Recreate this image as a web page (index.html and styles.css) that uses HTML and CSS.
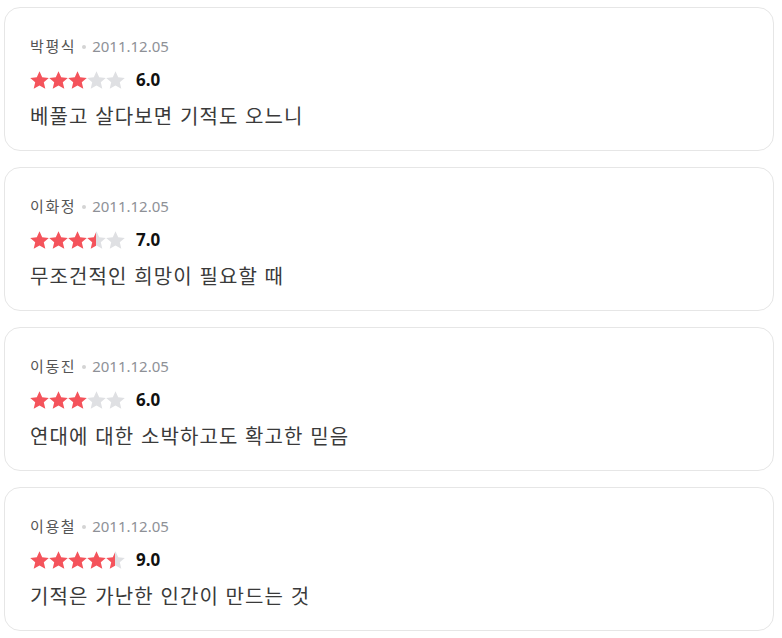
FILE: index.html
```html
<!DOCTYPE html>
<html lang="ko">
<head>
<meta charset="utf-8">
<link rel="stylesheet" href="styles.css">
</head>
<body>
<svg class="defs" width="0" height="0" aria-hidden="true">
  <defs>
    <linearGradient id="half" x1="0" x2="1" y1="0" y2="0">
      <stop offset="50%" stop-color="#f4535b"/>
      <stop offset="50%" stop-color="#dfe0e3"/>
    </linearGradient>
    <polygon id="star" points="9.5,0.3 12.2,6.3 18.8,6.9 13.8,11.3 15.3,17.8 9.5,14.4 3.7,17.8 5.2,11.3 0.2,6.9 6.8,6.3"/>
  </defs>
</svg>
<div class="list">
  <div class="card">
    <div class="meta"><span class="name">박평식</span><span class="dot"></span><span class="date">2011.12.05</span></div>
    <div class="rating">
      <span class="stars">
        <svg class="star on" viewBox="0 0 19 18"><use href="#star"/></svg>
        <svg class="star on" viewBox="0 0 19 18"><use href="#star"/></svg>
        <svg class="star on" viewBox="0 0 19 18"><use href="#star"/></svg>
        <svg class="star off" viewBox="0 0 19 18"><use href="#star"/></svg>
        <svg class="star off" viewBox="0 0 19 18"><use href="#star"/></svg>
      </span>
      <span class="score">6.0</span>
    </div>
    <p class="comment">베풀고 살다보면 기적도 오느니</p>
  </div>
  <div class="card">
    <div class="meta"><span class="name">이화정</span><span class="dot"></span><span class="date">2011.12.05</span></div>
    <div class="rating">
      <span class="stars">
        <svg class="star on" viewBox="0 0 19 18"><use href="#star"/></svg>
        <svg class="star on" viewBox="0 0 19 18"><use href="#star"/></svg>
        <svg class="star on" viewBox="0 0 19 18"><use href="#star"/></svg>
        <svg class="star half" viewBox="0 0 19 18"><use href="#star"/></svg>
        <svg class="star off" viewBox="0 0 19 18"><use href="#star"/></svg>
      </span>
      <span class="score">7.0</span>
    </div>
    <p class="comment">무조건적인 희망이 필요할 때</p>
  </div>
  <div class="card">
    <div class="meta"><span class="name">이동진</span><span class="dot"></span><span class="date">2011.12.05</span></div>
    <div class="rating">
      <span class="stars">
        <svg class="star on" viewBox="0 0 19 18"><use href="#star"/></svg>
        <svg class="star on" viewBox="0 0 19 18"><use href="#star"/></svg>
        <svg class="star on" viewBox="0 0 19 18"><use href="#star"/></svg>
        <svg class="star off" viewBox="0 0 19 18"><use href="#star"/></svg>
        <svg class="star off" viewBox="0 0 19 18"><use href="#star"/></svg>
      </span>
      <span class="score">6.0</span>
    </div>
    <p class="comment">연대에 대한 소박하고도 확고한 믿음</p>
  </div>
  <div class="card">
    <div class="meta"><span class="name">이용철</span><span class="dot"></span><span class="date">2011.12.05</span></div>
    <div class="rating">
      <span class="stars">
        <svg class="star on" viewBox="0 0 19 18"><use href="#star"/></svg>
        <svg class="star on" viewBox="0 0 19 18"><use href="#star"/></svg>
        <svg class="star on" viewBox="0 0 19 18"><use href="#star"/></svg>
        <svg class="star on" viewBox="0 0 19 18"><use href="#star"/></svg>
        <svg class="star half" viewBox="0 0 19 18"><use href="#star"/></svg>
      </span>
      <span class="score">9.0</span>
    </div>
    <p class="comment">기적은 가난한 인간이 만드는 것</p>
  </div>
</div>
</body>
</html>
```

FILE: styles.css
```css
html, body {
  margin: 0;
  padding: 0;
  background: #ffffff;
}
body {
  font-family: "Noto Sans", "Noto Sans CJK KR", sans-serif;
  color: #333;
}
.defs {
  position: absolute;
  width: 0;
  height: 0;
  overflow: hidden;
}
.list {
  display: flex;
  flex-direction: column;
  gap: 16px;
  padding: 7px 8px 0 4px;
}
.card {
  border: 1px solid #e6e6e6;
  border-radius: 16px;
  padding: 27px 25px 20px 25px;
  height: 144px;
  box-sizing: border-box;
  display: flex;
  flex-direction: column;
}
.meta {
  display: flex;
  align-items: center;
  height: 22px;
  font-size: 15px;
  line-height: 22px;
}
.name {
  color: #555;
  font-family: "Noto Sans CJK KR", sans-serif;
  letter-spacing: 1.6px;
}
.dot {
  width: 4px;
  height: 4px;
  border-radius: 50%;
  background: #d4d4d4;
  margin: 1px 6px 0 6px;
}
.date {
  color: #8e9197;
}
.rating {
  display: flex;
  align-items: center;
  height: 22px;
  margin-top: 12px;
}
.stars {
  display: flex;
}
.star {
  width: 19px;
  height: 18px;
  display: block;
}
.star.on { fill: #f4535b; }
.star.off { fill: #dfe0e3; }
.star.half { fill: url(#half); }
.score {
  margin-left: 11px;
  font-size: 17px;
  font-weight: 700;
  color: #111;
  line-height: 22px;
}
.comment {
  margin: 11px 0 0 0;
  font-family: "Noto Sans CJK KR", sans-serif;
  font-size: 20px;
  line-height: 28px;
  letter-spacing: 1.1px;
  color: #3a3a3a;
}
```
